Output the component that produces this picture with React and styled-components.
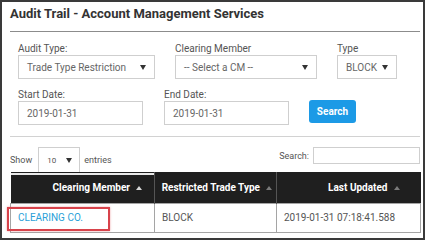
import styled, { createGlobalStyle } from 'styled-components';

const GlobalStyle = createGlobalStyle`
    body {
        margin: 0;
        background: #fff;
        font-family: Roboto, "Liberation Sans", sans-serif;
    }
`

const Frame = styled.div`
    position: relative;
    width: 425px;
    height: 240px;
    box-sizing: border-box;
    border: 2px solid #3a3a3a;
    padding: 4px 3px 0 8px;
    overflow: hidden;
`
const Title = styled.h1`
    margin: 0;
    font-size: 13px;
    line-height: 16px;
    font-weight: 700;
    color: #333;
`
const Rule = styled.div`
    height: 1px;
    background: ${p => p.color};
    margin-top: ${p => p.mt}px;
`
const Filters = styled.div`
    padding: 11px 0 0 8px;
`
const FilterRow = styled.div`
    display: flex;
    gap: ${p => p.gap}px;
    margin-top: ${p => p.mt || 0}px;
`
const Field = styled.div`
    display: flex;
    flex-direction: column;
    width: ${p => p.w}px;
`
const Label = styled.label`
    font-size: 10px;
    line-height: 12px;
    color: #555;
`
const Box = styled.div`
    display: flex;
    align-items: center;
    justify-content: space-between;
    height: 24px;
    box-sizing: border-box;
    border: 1px solid #cfcfcf;
    padding: 0 8px 0 ${p => p.pl || 8}px;
    font-size: ${p => p.fs || 10}px;
    color: #666;
`
const Caret = styled.span`
    width: 0;
    height: 0;
    border-left: 3px solid transparent;
    border-right: 3px solid transparent;
    border-top: 5px solid #333;
`
const SearchButton = styled.button`
    align-self: flex-end;
    margin: 0 0 2px -1px;
    width: 47px;
    height: 23px;
    border: none;
    border-radius: 3px;
    background: #1c9ae6;
    color: #fff;
    font-family: inherit;
    font-size: 10px;
    font-weight: 700;
    padding: 0;
`
const TableTools = styled.div`
    display: flex;
    justify-content: space-between;
    align-items: flex-start;
    margin-top: 10px;
    height: 25px;
`
const Inline = styled.div`
    display: flex;
    align-items: center;
    gap: 4px;
    font-size: 9px;
    color: #555;
`
const LengthSelect = styled.div`
    display: flex;
    align-items: center;
    justify-content: space-between;
    width: 42px;
    height: 25px;
    box-sizing: border-box;
    border: 1px solid #cfcfcf;
    border-bottom: none;
    padding: 0 7px 0 8px;
    font-size: 8px;
    color: #555;
    margin-left: 2px;
`
const SearchInput = styled.div`
    width: 107px;
    height: 17px;
    box-sizing: border-box;
    border: 1px solid #cfcfcf;
`
const Table = styled.table`
    width: 410px;
    border-collapse: collapse;
    table-layout: fixed;
`
const Th = styled.th`
    height: 31px;
    box-sizing: border-box;
    background: #1f1f1f;
    color: #fff;
    font-size: 10px;
    font-weight: 700;
    text-align: right;
    white-space: nowrap;
    padding: 0 ${p => p.pr}px 0 0;
    border-left: 1px solid #555;
    box-shadow: ${p => p.active ? 'inset 0 1px 0 #1f1f1f, inset 0 3px 0 #e9e9e9' : 'none'};
    &:first-child { border-left: none; }
`
const SortArrow = styled.span`
    display: inline-block;
    margin-left: 6px;
    vertical-align: 1px;
    width: 0;
    height: 0;
    border-left: 3px solid transparent;
    border-right: 3px solid transparent;
    border-bottom: 4px solid ${p => p.active ? '#d8d8d8' : '#7a7a7a'};
`
const Td = styled.td`
    position: relative;
    height: 29px;
    box-sizing: border-box;
    border: 1px solid #a5a5a5;
    padding: 0 0 0 7px;
    font-size: 10px;
    color: #555;
`
const Link = styled.a`
    color: #2a9fd8;
    text-decoration: none;
`
const Highlight = styled.span`
    position: absolute;
    left: -4px;
    top: 3px;
    width: 103px;
    height: 24px;
    box-sizing: border-box;
    border: 2px solid #d8434b;
    box-shadow: 0 0 2px rgba(216, 67, 75, 0.5);
`

function App(){
    return (
        <>
            <GlobalStyle />
            <Frame>
                <Title>Audit Trail - Account Management Services</Title>
                <Rule color={'#8c8c8c'} mt={9} />

                <Filters>
                    <FilterRow gap={20}>
                        <Field w={137}>
                            <Label>Audit Type:</Label>
                            <Box>Trade Type Restriction<Caret /></Box>
                        </Field>
                        <Field w={142}>
                            <Label>Clearing Member</Label>
                            <Box>-- Select a CM --<Caret /></Box>
                        </Field>
                        <Field w={60}>
                            <Label>Type</Label>
                            <Box>BLOCK<Caret /></Box>
                        </Field>
                    </FilterRow>

                    <FilterRow gap={21} mt={10}>
                        <Field w={125}>
                            <Label>Start Date:</Label>
                            <Box>2019-01-31</Box>
                        </Field>
                        <Field w={125}>
                            <Label>End Date:</Label>
                            <Box>2019-01-31</Box>
                        </Field>
                        <SearchButton>Search</SearchButton>
                    </FilterRow>
                </Filters>

                <Rule color={'#d2d2d2'} mt={11} />

                <TableTools>
                    <Inline>
                        Show
                        <LengthSelect>10<Caret /></LengthSelect>
                        entries
                    </Inline>
                    <Inline>
                        Search:
                        <SearchInput />
                    </Inline>
                </TableTools>

                <Table>
                    <colgroup>
                        <col style={{width: 144}} />
                        <col style={{width: 122}} />
                        <col style={{width: 144}} />
                    </colgroup>
                    <thead>
                        <tr>
                            <Th pr={12} active>Clearing Member<SortArrow active /></Th>
                            <Th pr={4}>Restricted Trade Type<SortArrow /></Th>
                            <Th pr={21}>Last Updated<SortArrow /></Th>
                        </tr>
                    </thead>
                    <tbody>
                        <tr>
                            <Td>
                                <Link href="#">CLEARING CO.</Link>
                                <Highlight />
                            </Td>
                            <Td>BLOCK</Td>
                            <Td>2019-01-31 07:18:41.588</Td>
                        </tr>
                    </tbody>
                </Table>
            </Frame>
        </>
    )
}

export default App;
